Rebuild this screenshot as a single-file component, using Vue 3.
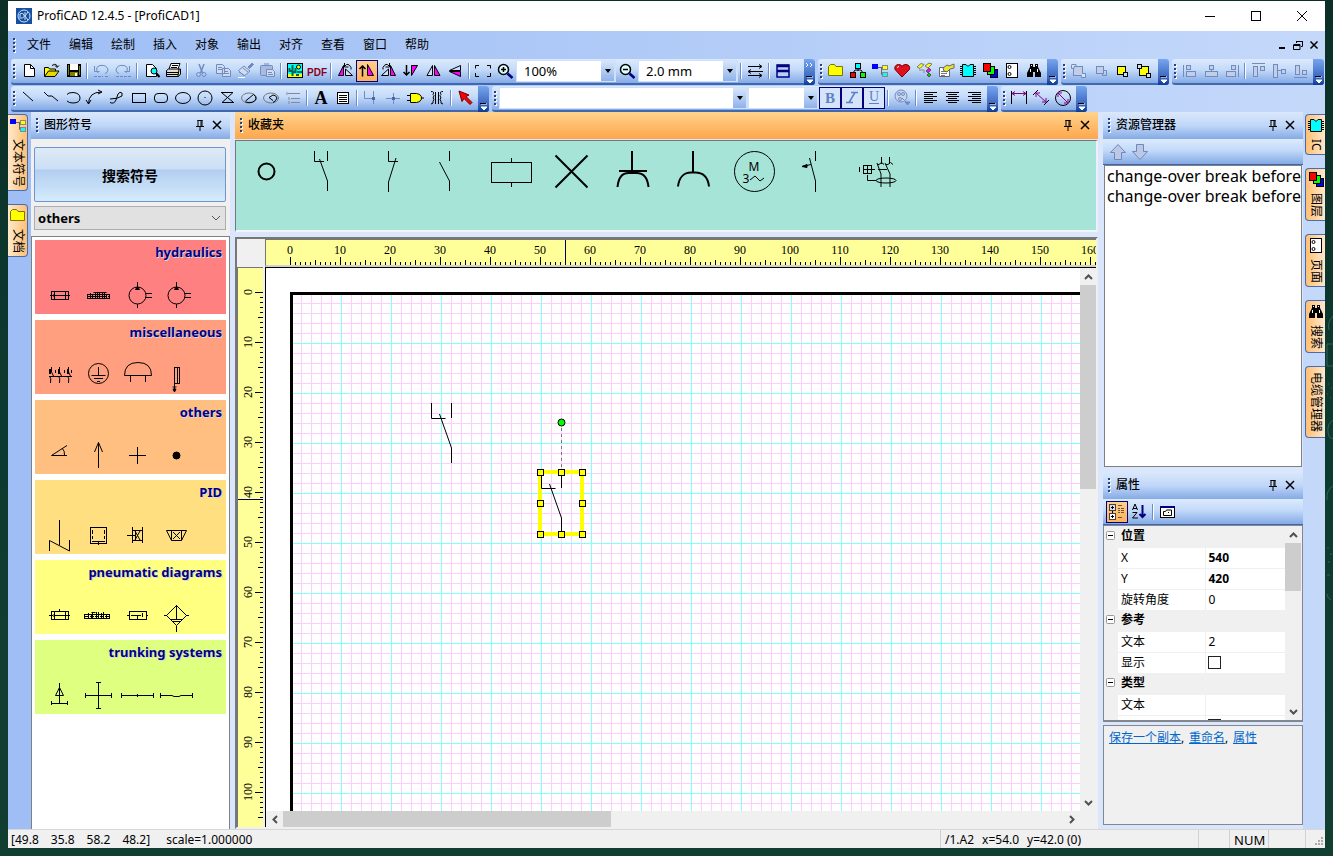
<script setup>
const D = '#6f8bc0'
const svgIcons = {
  new: '<path d="M6.500 4.500h6l4 4v8h-10z" fill="#fff" stroke="#000"/><path d="M12.500 4.500v4h4" fill="none" stroke="#000"/>',
  open: '<path d="M4.500 16V7.500h4l1 1.500h6V11" fill="#ff0" stroke="#000"/><path d="M4.500 16.500l4-5.500h10.500l-4 5.500z" fill="#e8d800" stroke="#000"/><path d="M12 5.500q3-2.500 5 0v1.500M15 5.500l2 2 2-2" fill="none" stroke="#000"/>',
  save: '<rect x="5" y="4" width="14" height="13" fill="#000"/><rect x="8" y="4" width="8" height="6" fill="#fff"/><path d="M6.500 5v10M17.500 6v9" stroke="#808000"/><rect x="8" y="12" width="8" height="4" fill="#808000"/><rect x="13" y="13" width="2" height="3" fill="#fff"/>',
  undo: `<path d="M8 13q-3.500-6 2-7.500 7-1 8 4.500-.500 3-3 3.500M4.500 6v5.500h5" fill="none" stroke="${D}"/><path d="M4 16.500h9M15 16.500h4" stroke="${D}" stroke-dasharray="3 1"/>`,
  redo: `<path d="M14 13q3.500-6-2-7.500-7-1-8 4.500 .5 3 3 3.500M17.500 6v5.500h-5" fill="none" stroke="${D}"/><path d="M4 16.500h15" stroke="${D}" stroke-dasharray="3 1"/>`,
  preview: '<path d="M6.500 4.500h6l4 4v8h-10z" fill="#fff" stroke="#000"/><circle cx="14" cy="11" r="3" fill="#0ff" stroke="#000"/><path d="M16 13l3.500 4" stroke="#000" stroke-width="2"/>',
  print: '<path d="M7 9l2-5.500h9l-2 5.500" fill="#fff" stroke="#000"/><path d="M4.500 10.500l2-1.500h12v5l-2 2.500h-12z" fill="#ddd" stroke="#000"/><path d="M4 12.500h13M5 14.500h11M17 9l-1 7M10 5.500h6M9 7.500h6" stroke="#000" fill="none"/><rect x="13" y="13" width="2" height="1" fill="#ff0"/>',
  cut: `<path d="M9 4l3.500 9M14 4l-3.500 9" stroke="${D}" fill="none" stroke-width="1.500"/><circle cx="8.500" cy="14.500" r="2" fill="none" stroke="${D}"/><circle cx="14" cy="14.500" r="2" fill="none" stroke="${D}"/>`,
  copy: `<path d="M4.500 4.500h6l2 2v7h-8zM10.500 8.500h6l2 2v6h-8z" fill="#d2dcf0" stroke="${D}"/><path d="M6 7.500h4M6 9.500h4M12 11.500h4M12 13.500h5" stroke="${D}"/>`,
  brush: `<path d="M14 7l4-4 1.500 1.500-4 4z" fill="${D}" stroke="${D}"/><path d="M10 6l6 5-6 5-5.500-5.500z" fill="#d2dcf0" stroke="${D}"/><path d="M5 12l5 3M9 8l5 4" stroke="${D}"/><path d="M4 17.500h7" stroke="#fff"/>`,
  paste: `<rect x="4.500" y="5.500" width="12" height="10" rx="1" fill="#a9bce0" stroke="${D}"/><path d="M7 5.500h7M8 4h5" stroke="${D}"/><path d="M10.500 9.500h6l2 2v5h-8z" fill="#d2dcf0" stroke="${D}"/><path d="M12 12.500h4M12 14.500h5" stroke="${D}"/>`,
  image: '<rect x="3.500" y="3.500" width="15" height="14" fill="#0ff" stroke="#000"/><path d="M4 14h14v3H4z" fill="#ff0"/><circle cx="14.500" cy="7" r="2" fill="#ff0" stroke="#000"/><path d="M8.500 5v11M5.500 8v3h3M11.500 8v4h-3M13 12h5M12 15h3" stroke="#064" stroke-width="2" fill="none"/>',
  pdf: '<text x="11" y="16" text-anchor="middle" font-family="Liberation Sans, Arial, sans-serif" font-weight="bold" font-size="10" fill="#8b0020">PDF</text>',
  rot1: '<path d="M4.500 15.500l5-10v10z" fill="#f0f" stroke="#000"/><path d="M11.500 15.500V9l7 6.500z" fill="#cfe0fa" stroke="#000"/><path d="M11 6q3-4 6 1.500v2M10.500 3v4h4" fill="none" stroke="#000"/>',
  rot2: '<path d="M6.500 16.500v-11M3.500 9l3-3 3 3" stroke="#000" fill="none" stroke-width="1.500"/><path d="M11.500 15.500v-11l6 11z" fill="#f0f" stroke="#000"/>',
  rot3: '<path d="M17.500 15.500l-5-10v10z" fill="#f0f" stroke="#000"/><path d="M10.500 15.500V9l-7 6.500z" fill="#cfe0fa" stroke="#000"/><path d="M11 6q-3-4-6 1.500v2M11.500 3v4h-4" fill="none" stroke="#000"/>',
  rot4: '<path d="M6.500 5v10M3.500 12l3 3 3-3" stroke="#000" fill="none" stroke-width="1.500"/><path d="M11.500 15.500v-10h6z" fill="#f0f" stroke="#000"/>',
  flipH: '<path d="M10.500 5.500v10h-5.500z" fill="#cfe0fa" stroke="#000"/><path d="M12.500 5.500v10h5.500z" fill="#f0f" stroke="#000"/>',
  flipV: '<path d="M5.500 10.500L16.500 5.500v5z" fill="#cfe0fa" stroke="#000"/><path d="M5.500 11.500l11 5v-5z" fill="#f0f" stroke="#000"/>',
  fit: '<path d="M7 5.500H3.500v3M3.500 13v3.500H7M15 5.500h3.500v3M18.500 13v3.500H15" fill="none" stroke="#000"/>',
  zin: '<circle cx="9.500" cy="9.500" r="5" fill="#dff" stroke="#000" stroke-width="1.500"/><path d="M7 9.500h5M9.500 7v5" stroke="#000" stroke-width="1.500"/><path d="M13.500 13.500l5 4.500" stroke="#000080" stroke-width="2.500"/>',
  zout: '<circle cx="9.500" cy="9.500" r="5" fill="#dff" stroke="#000" stroke-width="1.500"/><path d="M7 9.500h5" stroke="#000" stroke-width="1.500"/><path d="M13.500 13.500l5 4.500" stroke="#000080" stroke-width="2.500"/>',
  arrows: '<path d="M4 6.500h13M15 4.500l3 2-3 2M19 11.500H5M7 9.500l-3 2 3 2M4 15.500h13M15 13.500l3 2-3 2" stroke="#000" fill="none"/>',
  bars: '<rect x="5" y="5" width="12" height="12" fill="#b9d0f5" stroke="#000080" stroke-width="1.500"/><path d="M5 6h12M5 11h12" stroke="#000080" stroke-width="2.500"/>',
  folder: '<path d="M3.500 15.500v-9l2-2h4l1.500 2h6.500v9z" fill="#ff0" stroke="#777700"/>',
  tree: '<path d="M11 8v3M6 13l2-3h6l2 3" stroke="#000" fill="none"/><rect x="8.500" y="3.500" width="5" height="5" fill="#0ff" stroke="#000"/><rect x="3.500" y="12.500" width="5" height="5" fill="red" stroke="#000"/><rect x="13.500" y="12.500" width="5" height="5" fill="#0f0" stroke="#000"/>',
  net: '<path d="M9 7.500h5M12.500 7.500v7h2" stroke="#666" fill="none"/><rect x="3" y="4" width="6" height="5" fill="#00f"/><rect x="13.500" y="5.500" width="5" height="4" fill="#ff0" stroke="#888"/><rect x="13.500" y="12.500" width="5" height="4" fill="#0ff" stroke="#888"/>',
  heart: '<path d="M11 17L4 9.500Q3 5 7.500 4.500q3 0 3.500 2 .5-2 4-2 4.500.500 3.500 5z" fill="#e01020" stroke="#700"/><path d="M6 7.500l2-1" stroke="#fff"/>',
  tags: '<path d="M4 7l4-3.500 3 1-4 4zM12 6l4-3 3 1-4 4z" fill="#ff0" stroke="#777"/><path d="M13 11l3-3 2 2-3 3z" fill="#f0f" stroke="#555"/><path d="M14 15l2-2 2 2-2 2z" fill="#0c0" stroke="#555"/><path d="M6 10h5v3" stroke="#888" fill="none"/>',
  props: '<path d="M4.500 7.500h10v9h-10z" fill="#fff" stroke="#666"/><path d="M6 11.500h6M6 13.500h6M6 15.500h4" stroke="#777"/><path d="M8 8l4-3 2 1 5-2v4l-4 1-3 3-3-1z" fill="#e8e830" stroke="#666"/>',
  chip: '<path d="M5.500 4.500h3.500l2 2 2-2h3.500v12h-11z" fill="#0ff" stroke="#000"/><path d="M3 6.500h3M3 8.500h3M3 10.500h3M3 12.500h3M3 14.500h3M16 6.500h3M16 8.500h3M16 10.500h3M16 12.500h3M16 14.500h3" stroke="#000"/>',
  layers: '<rect x="11.500" y="9.500" width="7" height="8" fill="#00f" stroke="#000"/><rect x="8.500" y="6.500" width="7" height="8" fill="#0f0" stroke="#000"/><rect x="4.500" y="3.500" width="7" height="8" fill="red" stroke="#000"/>',
  page: '<rect x="5.500" y="3.500" width="11" height="14" fill="#fff" stroke="#000"/><circle cx="8.500" cy="7" r="1.500" fill="none" stroke="#000"/><circle cx="8.500" cy="14" r="1.500" fill="none" stroke="#000"/>',
  find: '<path d="M7 4h3v3h2V4h3v3l3 6v4h-6v-5h-2v5H4v-4l3-6z" fill="#000"/><path d="M8.500 5v1M13.500 5v1M7.500 9v3M14.500 9v3" stroke="#fff"/>',
  front: `<rect x="5.500" y="6.500" width="9" height="9" fill="#c3cde6" stroke="${D}"/><path d="M4 4.500h4v2h-2v2H3.500v-4M14.500 13.500h3v4h-4v-2" fill="#d7e4fa" stroke="${D}"/>`,
  back: `<rect x="6.500" y="6.500" width="7" height="7" fill="#c3cde6" stroke="${D}"/><path d="M13.500 10.500h3v5h-4v-2" fill="none" stroke="${D}"/>`,
  fwd: '<rect x="5.500" y="6.500" width="8" height="8" fill="#ff0" stroke="#000"/><rect x="11.500" y="12.500" width="4" height="4" fill="#cde" stroke="#000"/>',
  bwd: '<rect x="5.500" y="6.500" width="9" height="9" fill="#ff0" stroke="#000"/><rect x="3.500" y="4.500" width="4" height="4" fill="#cde" stroke="#000"/><rect x="12.500" y="13.500" width="4" height="4" fill="#cde" stroke="#000"/>',
  alL: `<path d="M4.500 5v12" stroke="${D}"/><rect x="7.500" y="5.500" width="4" height="4" fill="#c3cde6" stroke="${D}"/><rect x="7.500" y="11.500" width="9" height="5" fill="#c3cde6" stroke="${D}"/>`,
  alC: `<path d="M11.500 9v3" stroke="${D}"/><rect x="9.500" y="5.500" width="4" height="4" fill="#c3cde6" stroke="${D}"/><rect x="5.500" y="11.500" width="12" height="5" fill="#c3cde6" stroke="${D}"/>`,
  alR: `<path d="M17.500 5v12" stroke="${D}"/><rect x="10.500" y="5.500" width="4" height="4" fill="#c3cde6" stroke="${D}"/><rect x="5.500" y="11.500" width="9" height="5" fill="#c3cde6" stroke="${D}"/>`,
  alT: `<path d="M4 3.500h13" stroke="${D}"/><rect x="5.500" y="6.500" width="4" height="10" fill="#c3cde6" stroke="${D}"/><rect x="12.500" y="6.500" width="4" height="4" fill="#c3cde6" stroke="${D}"/>`,
  alM: `<path d="M9 10.500h4" stroke="${D}"/><rect x="4.500" y="4.500" width="4" height="13" fill="#c3cde6" stroke="${D}"/><rect x="12.500" y="9.500" width="4" height="4" fill="#c3cde6" stroke="${D}"/>`,
  alB: `<path d="M4 17.500h13" stroke="${D}"/><rect x="5.500" y="5.500" width="4" height="9" fill="#c3cde6" stroke="${D}"/><rect x="12.500" y="10.500" width="4" height="4" fill="#c3cde6" stroke="${D}"/>`,
  line: '<path d="M5 5l10 9" stroke="#000"/>',
  poly: '<path d="M4 5l4 4h4l6 5" stroke="#000" fill="none"/>',
  arc: '<path d="M5 7.500q1-2 6-2 7 .500 7 5.500 0 5-7 5-4 0-6-2" fill="none" stroke="#000"/>',
  curve: '<path d="M4.500 17q0-12 13-12M14 3l4 2-4 2M2 13l2.500 4 2.500-4" fill="none" stroke="#000"/>',
  bez: '<path d="M4 15.500q4 2 6-2.500l2-6q2-3 4-1v3q-4 3-12 3" fill="none" stroke="#000"/>',
  rect: '<rect x="4.500" y="6.500" width="13" height="9" fill="none" stroke="#000"/>',
  rrect: '<rect x="4.500" y="6.500" width="13" height="9" rx="3.500" fill="none" stroke="#000"/>',
  ell: '<ellipse cx="11" cy="11" rx="7.500" ry="5.500" fill="none" stroke="#000"/>',
  circ: '<circle cx="11" cy="11" r="7" fill="none" stroke="#000"/><path d="M10.500 10.500h1" stroke="#000"/>',
  hour: '<path d="M5 5.500h12L6 15.500h12M6 6l11 9" fill="none" stroke="#000"/>',
  pie: '<ellipse cx="11" cy="11" rx="7.500" ry="5" fill="none" stroke="#777"/><path d="M7.500 15q8 2 10.500-3 0-3-2.500-4.500L7.500 14" fill="none" stroke="#000"/>',
  chord: '<ellipse cx="11" cy="11" rx="7.500" ry="5" fill="none" stroke="#777"/><path d="M13 13.500l-4-3 4-2.500q3 0 4 3-1 3-4 4.500" fill="none" stroke="#000"/>',
  listd: '<path d="M6 6.500h12M9 11.500h9M9 15.500h9M5 5v3M7 10v3M7 14v3" stroke="#889"/>',
  textA: '<text x="11" y="17" text-anchor="middle" font-family="Liberation Serif, serif" font-weight="bold" font-size="18" fill="#000">A</text>',
  doc: '<rect x="5.500" y="5.500" width="11" height="11" fill="#fff" stroke="#000"/><path d="M7 8.500h8M7 10.500h8M7 12.500h8M7 14.500h8" stroke="#000"/>',
  wire1: `<path d="M4.500 4v7.500h9M13.500 4v13" stroke="${D}" fill="none"/><rect x="12" y="10" width="3" height="3" fill="#4a68a8"/>`,
  wire2: `<path d="M4 11.500h14M11.500 6v11" stroke="${D}" fill="none"/><rect x="10" y="10" width="3" height="3" fill="#4a68a8"/>`,
  gate: '<path d="M6.500 6.500h6q5 1 5 4.500t-5 4.500h-6z" fill="#ff0" stroke="#000"/><path d="M3 8.500h3M3 13.500h3M17 11h3" stroke="#000"/>',
  coil: '<path d="M5 4.500q4 0 2 3 2 .5 0 3.500 2 .5 0 3.500 1 2-2 2.500M17 4.500q-4 0-2 3-2 .5 0 3.500-2 .5 0 3.500-1 2 2 2.500M9.500 5v12M12.500 5v12" fill="none" stroke="#000"/>',
  cursor: '<path d="M5 4l10 4-3 1.500 6 6-2 2-6-6-2 3z" fill="red" stroke="#600"/>',
  bold: '<text x="11" y="16" text-anchor="middle" font-family="Liberation Serif, serif" font-weight="bold" font-size="15" fill="#5b82c4">B</text>',
  italic: '<path d="M10 5.500h7M5 15.500h7M14 5.500L8 15.500" stroke="#5b82c4" stroke-width="1.500"/>',
  under: '<text x="11" y="14" text-anchor="middle" font-family="Liberation Serif, serif" font-size="14" fill="#5b82c4">U</text><path d="M6 16.500h10" stroke="#5b82c4"/>',
  palette: `<circle cx="10" cy="9" r="6" fill="#c9d6ef" stroke="${D}"/><circle cx="8" cy="7" r="1.500" fill="none" stroke="${D}"/><circle cx="12" cy="7" r="1.500" fill="none" stroke="${D}"/><circle cx="9" cy="12" r="1.500" fill="none" stroke="${D}"/><path d="M11 11l5 5M14 15h5l-2.500 3z" stroke="${D}" fill="${D}"/>`,
  txL: '<path d="M5 5.500h13M5 7.500h9M5 9.500h13M5 11.500h9M5 13.500h13M5 15.500h9" stroke="#000"/>',
  txC: '<path d="M5 5.500h13M7 7.500h9M5 9.500h13M7 11.500h9M5 13.500h13M7 15.500h9" stroke="#000"/>',
  txR: '<path d="M5 5.500h13M9 7.500h9M5 9.500h13M9 11.500h9M5 13.500h13M9 15.500h9" stroke="#000"/>',
  dimH: '<path d="M3.500 4v13M18.500 4v13" stroke="#000"/><path d="M4 6.500h14M7 4.500l-3 2 3 2M15 4.500l3 2-3 2" stroke="#808" fill="none"/>',
  dimD: '<path d="M3 8l5-5M14 18l5-5" stroke="#000"/><path d="M6 6l10 9M6 10V6h4M16 11v4h-4" stroke="#808" fill="none"/>',
  dimC: '<circle cx="11" cy="11" r="7.500" fill="none" stroke="#000"/><path d="M6 6l10 10M6 10V6h4M16 12v4h-4" stroke="#808" fill="none"/>',
  up: '<path d="M12 3.500l7.500 8H15.500v7h-7v-7H4.500z" fill="#bcc9e6" stroke="#7088b8"/>',
  down: '<path d="M12 18.500l7.500-8H15.500v-7h-7v7H4.500z" fill="#bcc9e6" stroke="#7088b8"/>',
  cat: '<rect x="3.500" y="3.500" width="6" height="6" fill="#ddd" stroke="#444"/><rect x="3.500" y="12.500" width="6" height="6" fill="#fff" stroke="#444"/><path d="M5 6.500h3M6.500 5v3M5 15.500h3M6.500 14v3M6.500 10v2" stroke="#000"/><path d="M12 4.500h4M12 7.500h2M15 7.500h3M12 9.500h2M15 9.500h3M12 11.500h2M15 11.500h3M12 16.500h4" stroke="#6a5a3a"/>',
  az: '<path d="M4.500 9L7 3l2.500 6M5 7.500h4M4.500 11.500H9l-4.500 5.500H10" fill="none" stroke="#000"/><path d="M14.500 4v12M11.500 13l3 3 3-3" fill="none" stroke="#000080" stroke-width="2"/>',
  pages: '<rect x="4.500" y="5.500" width="14" height="11" fill="#fff" stroke="#000"/><path d="M4 6h15" stroke="#000080" stroke-width="2"/><path d="M7.500 14.500v-4h2l1-1.500h5v5.500zM12 11.500h1" fill="none" stroke="#000"/>'
}

const menus = ['文件', '编辑', '绘制', '插入', '对象', '输出', '对齐', '查看', '窗口', '帮助']
const row1 = [
  { key: 'std', cls: 'wide', more: true, items: ['new', 'open', 'save', '|', 'undo', 'redo', '|', 'preview', 'print', '|', 'cut', 'copy', 'brush', 'paste', '|', 'image', 'pdf', '|', 'rot1', '*rot2', 'rot3', 'rot4', 'flipH', 'flipV', '|', 'fit', 'zin', '#zoom', 'zout', '#step', '|', 'arrows', '|', 'bars'] },
  { key: 'lib', items: ['folder', 'tree', 'net', 'heart', 'tags', 'props', 'chip', 'layers', 'page', 'find'] },
  { key: 'order', items: ['front', 'back', 'fwd', 'bwd'] },
  { key: 'align', cls: 'tight', items: ['alL', 'alC', 'alR', '|', 'alT', 'alM', 'alB'] }
]
const row2 = [
  { key: 'draw', items: ['line', 'poly', 'arc', 'curve', 'bez', 'rect', 'rrect', 'ell', 'circ', 'hour', 'pie', 'chord', 'listd', '|', 'textA', 'doc', '|', 'wire1', 'wire2', 'gate', 'coil', '|', 'cursor'] },
  { key: 'font', items: ['#font', '#size', '!bold', '!italic', '!under', '|', 'palette', '|', 'txL', 'txC', 'txR'] },
  { key: 'dim', items: ['dimH', 'dimD', 'dimC'] }
]
const combos = { zoom: '100%', step: '2.0 mm', font: '', size: '' }
const isBtn = (s) => s !== '|' && s[0] !== '#'
const bare = (s) => s.replace(/^[*!#]/, '')

const pump = '<circle cx="19.500" cy="21.500" r="8.500"/><path d="M19.500 8v5M19.500 30v4M28 19.500h6M28 23.500h6"/><path d="M17.500 15.500l2-3 2 3z" fill="#000"/>'
const groups = [
  { name: 'hydraulics', cls: 'g1', sym: [
    '<rect x="11.500" y="17.500" width="17" height="8"/><path d="M10 21.500h4M14.500 17v9M25.500 17v9M14 21.500h16M14 20v3"/>',
    '<rect x="8.500" y="20.500" width="22" height="4"/><path d="M14.500 18.500h13M11.500 19v6M13.500 20v5M16.500 18v7M18.500 18v7M20.500 18v7M23.500 18v7M25.500 19v6M27.500 20v5"/><path d="M9 22.500h22" stroke-dasharray="4 1"/>',
    pump, pump] },
  { name: 'miscellaneous', cls: 'g2', sym: [
    '<path d="M9 22.500h23M10.500 29q1-5-1-7M19.500 29q1-5-1-7M28.500 29q1-5-1-7M11.500 13v5l2 4M19.500 13v5l2 4M28.500 13v5l2 4M15.500 16v3M24.500 16v3M31.500 16v3"/><path d="M10 15v5M19 15v5M28 15v5" stroke-width="2"/>',
    '<circle cx="19.500" cy="19.500" r="10"/><path d="M19.500 13v8M12.500 21.500h14M15 24.500h9M18 27.500h3"/>',
    '<path d="M6.500 21.500q0-13 13.500-13t13.500 13zM12.500 22v6M27.500 22v6"/>',
    '<rect x="17.500" y="13.500" width="5" height="16"/><path d="M20.500 14v15M17.500 29v7M15.500 33h4"/><path d="M16 35l1.500 3 1.500-3z" fill="#000"/>'] },
  { name: 'others', cls: 'g3', sym: [
    '<path d="M27 11.500L11.500 21.500H27M22 14q3 3 2.500 7"/>',
    '<path d="M19.500 34V8.500M15.500 18l4-9.500 4 9.500"/>',
    '<path d="M11 21.500h17M19.500 13v17"/>',
    '<circle cx="19.500" cy="21.500" r="3.500" fill="#000"/>'] },
  { name: 'PID', cls: 'g4', sym: [
    '<path d="M19.500 6v25M9.500 37V26.500l20 10.500V26"/>',
    '<rect x="11.500" y="13.500" width="16" height="16"/><path d="M13.500 16v9M25.500 16v9" stroke-dasharray="4 2"/><path d="M13 27.500h13M19.500 28v3"/>',
    '<path d="M14.500 13v16M24.500 13v16M14 16.500h11M14 26.500h11M9 21.500h8M17 17l5 9M22 17l-5 9M17.500 17v9"/>',
    '<path d="M9.500 16.500h20l-5 10h-10zM14.500 16.500v10M24.500 16.500v10M16 18l7 7M23 18l-7 7"/>'] },
  { name: 'pneumatic diagrams', cls: 'g5', sym: [
    '<rect x="11.500" y="17.500" width="17" height="8"/><path d="M9 21.500h4M14.500 17v9M25.500 17v9M14 21.500h16M19.500 15v2M14 20v3"/>',
    '<rect x="5.500" y="20.500" width="25" height="4"/><path d="M12.500 18.500h4M9.500 19v6M12.500 20v5M13.500 18v7M17.500 18v7M19.500 18v7M22.500 19v6M24.500 18v7M27.500 20v5"/><path d="M6 22.500h25" stroke-dasharray="4 1"/>',
    '<rect x="11.500" y="17.500" width="17" height="8"/><path d="M9 21.500h3M13 21.500h10M24.500 19v4M19.500 22v3M28 21.500h2"/>',
    '<path d="M9.500 21.500l10-10 10 10-10 10zM19.500 11v15M14 25.500h11M16 27.500h7M19.500 32v6M7 21.500h3M29 21.500h3"/>'] },
  { name: 'trunking systems', cls: 'g6', sym: [
    '<path d="M19.500 9v20M11.500 27v4M27.500 27v4M11 29.500h17M15.500 21.500l4-8 4 8z"/>',
    '<path d="M6 21.500h27M6.500 19v5M32.500 19v5M19.500 8v27M17 8.500h5M17 34.500h5"/>',
    '<path d="M3 21.500h33M3.500 19v5M35.500 19v5M19.500 20v3"/>',
    '<path d="M3 21.500h12l2 1h5l2-1h12M3.500 19v5M35.500 19v5"/>'] }
]
const favs = [
  '<circle cx="30.500" cy="30.500" r="8" stroke-width="2"/>',
  '<path d="M17.500 10v10.500H27M30.500 10v10M22.500 18l8 22v10"/>',
  '<path d="M30.500 10v10.500H40M38 17l-7.500 24v10"/>',
  '<path d="M30.500 10v10M20.500 21l10 19v10"/>',
  '<rect x="11.500" y="21.500" width="40" height="20"/><path d="M31.500 17v4M31.500 42v4"/>',
  '<path d="M14.500 14.500l32 32M46.500 14.500l-32 32" stroke-width="2"/>',
  '<path d="M30 10v21M17 30h28M15.500 46c1-10 5-14 11-14h8c7 0 11 4 12 14" stroke-width="2"/>',
  '<path d="M30 10v22M15 45.500c1-9 6-14 13-14h4c8 0 13 5 14 14" stroke-width="2"/>',
  '<circle cx="30.500" cy="30.500" r="20"/><text x="30" y="30" text-anchor="middle" font-size="12" stroke="none" fill="#000">M</text><text x="22" y="42" text-anchor="middle" font-size="12" stroke="none" fill="#000">3</text><path d="M26 39l5-4 5 5 4-3"/>',
  '<path d="M30.500 10v10M24.500 17l6 23v11M17 25.500l9-2"/><path d="M17 25.500l5-2v3z" fill="#000"/>',
  '<rect x="17.500" y="24.500" width="8" height="8"/><path d="M13.500 26v5M21.500 24v9M17 28.500h12M32 28.500h9M21.500 34v5.500h9M35.500 16v7M43.500 16v7M31 23.500h2l2.500-2 2.500 2M40 23.500h2l2.500-2 2.500 2M31 22l4 11v13M39 22l5 11v13"/><ellipse cx="40" cy="39.500" rx="10" ry="2.500"/>'
]
const hMarks = Array.from({ length: 200 }, (_, i) => i)
const hLabels = Array.from({ length: 17 }, (_, i) => i)
const tick = (i) => (i % 10 === 0 ? 8 : i % 5 === 0 ? 5 : 3)
const handles = [[270, 200], [291, 200], [312, 200], [270, 231], [312, 231], [270, 262], [291, 262], [312, 262]]
const rightTabs = [
  { t: 'IC', i: 'chip' }, { t: '图层', i: 'layers' }, { t: '页面', i: 'page' }, { t: '搜索', i: 'find' }, { t: '电缆管理器', i: '' }
]
const props = [
  { cat: '位置' }, { n: 'X', v: '540', b: true }, { n: 'Y', v: '420', b: true }, { n: '旋转角度', v: '0' },
  { cat: '参考' }, { n: '文本', v: '2' }, { n: '显示', check: true },
  { cat: '类型' }, { n: '文本', v: '' }, { n: '显示', check: true }
]
const results = ['change-over break before', 'change-over break before']
</script>

<template>
  <div class="desktop">
    <svg class="chalk" width="8" height="400" fill="none" stroke="#4f7d70"><path d="M8 6q-6 6-4 14M2 34h6M2 34v22h6M3 74h1M6 78h1M2 84h1M5 88h1M8 110q-6 4-5 12t5 6M8 176q-7 4-6 14M2 238h2M5 244h2M3 252h2M2 265h3M6 290q-4-2-4-6" /></svg>
    <div class="window">
      <header class="title">
        <svg class="logo" width="16" height="16" viewBox="0 0 16 16"><rect width="16" height="16" fill="#1450a0" /><g fill="none" stroke="#cfe2fa"><circle cx="8" cy="8" r="6" /><path d="M4 11V6q3-2 4 1t-3 3M9 4v8M12 4L9 8l3 4" /></g></svg>
        <h1>ProfiCAD 12.4.5 - [ProfiCAD1]</h1>
        <button class="wb" aria-label="Minimize"><svg width="12" height="12"><path d="M1 6.500h10" stroke="#000" /></svg></button>
        <button class="wb" aria-label="Maximize"><svg width="12" height="12"><rect x="1.500" y="1.500" width="9" height="9" fill="none" stroke="#000" /></svg></button>
        <button class="wb" aria-label="Close"><svg width="12" height="12"><path d="M1 1l10 10M11 1L1 11" stroke="#000" /></svg></button>
      </header>

      <nav class="menu">
        <span class="grip"></span>
        <button v-for="m in menus" :key="m" class="mi">{{ m }}</button>
        <span class="mdi">
          <button aria-label="Minimize document"><svg width="12" height="12"><path d="M3 9h6" stroke="#000" stroke-width="2" /></svg></button>
          <button aria-label="Restore document"><svg width="12" height="12"><path d="M4.500 4V2.500h6v5H9M4 2.500h7M2 5.500h6v5H1.500v-5M1 6.500h7" fill="none" stroke="#000" /></svg></button>
          <button aria-label="Close document"><svg width="12" height="12"><path d="M2.500 2.500l7 7M9.500 2.500l-7 7" stroke="#000" stroke-width="1.500" /></svg></button>
        </span>
      </nav>

      <div v-for="(row, r) in [row1, row2]" :key="r" class="bars">
        <div v-for="tb in row" :key="tb.key" class="bar" :class="tb.cls" role="toolbar" :aria-label="tb.key">
          <span class="grip"></span>
          <template v-for="(it, k) in tb.items" :key="k">
            <span v-if="it === '|'" class="sep"></span>
            <button v-else-if="isBtn(it)" class="tb" :class="{ on: it[0] === '*', boxed: it[0] === '!' }" :aria-label="bare(it)">
              <svg width="22" height="22" viewBox="0 0 22 22" v-html="svgIcons[bare(it)]"></svg>
            </button>
            <label v-else class="combo" :class="bare(it)">
              <select :aria-label="bare(it)"><option>{{ combos[bare(it)] }}</option></select>
              <span class="drop"></span>
            </label>
          </template>
          <button class="more" aria-label="Toolbar options">
            <svg width="11" height="26" viewBox="0 0 11 26"><path v-if="tb.more" d="M2 4l2 2-2 2M6 4l2 2-2 2" stroke="#fff" fill="none" /><path d="M3 18h6M3 21h6l-3 3z" stroke="#fff" fill="#fff" /><path d="M2 17.500h6" stroke="#000" /></svg>
          </button>
        </div>
      </div>

      <main class="main">
        <aside class="strip left">
          <button class="tab"><svg width="22" height="22" viewBox="0 0 22 22" v-html="svgIcons.net"></svg><span>文本符号</span></button>
          <button class="tab"><svg width="22" height="22" viewBox="0 0 22 22" v-html="svgIcons.folder"></svg><span>文档</span></button>
        </aside>

        <section class="panel symbols">
          <header class="ph"><span class="grip"></span><h2>图形符号</h2>
            <button aria-label="Pin"><svg width="12" height="12"><path d="M4 1v6M7 1v6M8 1v6M3.500 1.500h5M2 7.500h8M6 8v4" stroke="#000" fill="none" /></svg></button>
            <button aria-label="Close"><svg width="12" height="12"><path d="M2 2l8 8M10 2l-8 8" stroke="#000" stroke-width="1.500" /></svg></button>
          </header>
          <div class="tools">
            <button class="search">搜索符号</button>
            <label class="cat"><select aria-label="Category"><option>others</option></select><svg width="10" height="6"><path d="M1 1l4 4 4-4" fill="none" stroke="#555" /></svg></label>
          </div>
          <div class="cards">
            <article v-for="g in groups" :key="g.name" class="card" :class="g.cls">
              <h3>{{ g.name }}</h3>
              <div class="syms"><svg v-for="(s, k) in g.sym" :key="k" width="39" height="40" fill="none" stroke="#000" v-html="s"></svg></div>
            </article>
          </div>
        </section>

        <section class="center">
          <header class="ph hot"><span class="grip"></span><h2>收藏夹</h2>
            <button aria-label="Pin"><svg width="12" height="12"><path d="M4 1v6M7 1v6M8 1v6M3.500 1.500h5M2 7.500h8M6 8v4" stroke="#000" fill="none" /></svg></button>
            <button aria-label="Close"><svg width="12" height="12"><path d="M2 2l8 8M10 2l-8 8" stroke="#000" stroke-width="1.500" /></svg></button>
          </header>
          <div class="favs"><svg v-for="(f, k) in favs" :key="k" width="61" height="60" fill="none" stroke="#000" v-html="f"></svg></div>
          <div class="work">
            <div class="corner"></div>
            <div class="hr">
              <svg width="100%" height="25">
                <path v-for="i in hMarks" :key="i" :d="`M${24.5 + i * 5} 25v-${tick(i)}`" stroke="#000" />
                <text v-for="i in hLabels" :key="'l' + i" :x="24 + i * 50" y="14" text-anchor="middle">{{ i * 10 }}</text>
                <path d="M299.500 0v20" stroke="#000060" />
              </svg>
            </div>
            <div class="vr">
              <svg width="25" height="100%">
                <path v-for="i in 106" :key="i" :d="`M25 ${19.5 + i * 5}h-${tick(i - 1)}`" stroke="#000" />
                <text v-for="i in 11" :key="'v' + i" :transform="`translate(14 ${i * 50 - 26}) rotate(-90)`" text-anchor="middle">{{ (i - 1) * 10 }}</text>
                <path d="M0 231.500h25" stroke="#000060" />
              </svg>
            </div>
            <div class="view">
              <div class="sheet">
                <svg width="100%" height="100%">
                  <defs>
                    <pattern id="grid" x="0" y="0" width="50" height="50" patternUnits="userSpaceOnUse">
                      <path d="M5.500 0v50M15.500 0v50M35.500 0v50M45.500 0v50M0 5.500h50M0 15.500h50M0 35.500h50M0 45.500h50" stroke="#fcf" />
                      <path d="M25.500 0v50M0 25.500h50" stroke="#80ffff" />
                    </pattern>
                  </defs>
                  <rect x="24" y="24" width="100%" height="100%" fill="url(#grid)" />
                  <path d="M3000 25.500H25.500V3000" fill="none" stroke="#000" stroke-width="3" />
                  <g fill="none" stroke="#000">
                    <path d="M165.500 135v15.500h14M185.500 135v15M173.500 146l12 34v15" />
                    <path d="M295.500 160v40" stroke="#777" stroke-dasharray="3 3" />
                    <rect x="274" y="204" width="42" height="62" stroke="#ff0" stroke-width="4" />
                    <path d="M275.500 206v14.500h14M295.500 205v15M283.500 216l12 34v15" />
                    <g fill="#ff0"><rect v-for="(h, k) in handles" :key="k" :x="h[0] + 1.5" :y="h[1] + 1.5" width="6" height="6" /></g>
                    <circle cx="295.500" cy="154.500" r="3.500" fill="#0f0" />
                  </g>
                </svg>
              </div>
              <div class="sb v">
                <button aria-label="Up"><svg width="9" height="6"><path d="M1 5l3.500-3.500L8 5" /></svg></button>
                <div class="track"><div class="thumb"></div></div>
                <button aria-label="Down"><svg width="9" height="6"><path d="M1 1l3.500 3.500L8 1" /></svg></button>
              </div>
              <div class="sb h">
                <button aria-label="Left"><svg width="6" height="9"><path d="M5 1L1.500 4.500 5 8" /></svg></button>
                <div class="track"><div class="thumb"></div></div>
                <button aria-label="Right"><svg width="6" height="9"><path d="M1 1l3.500 3.500L1 8" /></svg></button>
              </div>
              <div class="nook"></div>
            </div>
          </div>
        </section>

        <section class="panel right">
          <header class="ph"><span class="grip"></span><h2>资源管理器</h2>
            <button aria-label="Pin"><svg width="12" height="12"><path d="M4 1v6M7 1v6M8 1v6M3.500 1.500h5M2 7.500h8M6 8v4" stroke="#000" fill="none" /></svg></button>
            <button aria-label="Close"><svg width="12" height="12"><path d="M2 2l8 8M10 2l-8 8" stroke="#000" stroke-width="1.500" /></svg></button>
          </header>
          <div class="ptb">
            <button v-for="n in ['up', 'down']" :key="n" class="tb" :aria-label="n"><svg width="22" height="22" viewBox="0 0 22 22" v-html="svgIcons[n]"></svg></button>
          </div>
          <ul class="found"><li v-for="(t, k) in results" :key="k">{{ t }}</li></ul>

          <header class="ph second"><span class="grip"></span><h2>属性</h2>
            <button aria-label="Pin"><svg width="12" height="12"><path d="M4 1v6M7 1v6M8 1v6M3.500 1.500h5M2 7.500h8M6 8v4" stroke="#000" fill="none" /></svg></button>
            <button aria-label="Close"><svg width="12" height="12"><path d="M2 2l8 8M10 2l-8 8" stroke="#000" stroke-width="1.500" /></svg></button>
          </header>
          <div class="ptb">
            <button class="tb on" aria-label="Categorized"><svg width="22" height="22" viewBox="0 0 22 22" v-html="svgIcons.cat"></svg></button>
            <button class="tb" aria-label="Alphabetical"><svg width="22" height="22" viewBox="0 0 22 22" v-html="svgIcons.az"></svg></button>
            <span class="sep"></span>
            <button class="tb" aria-label="Property pages"><svg width="22" height="22" viewBox="0 0 22 22" v-html="svgIcons.pages"></svg></button>
          </div>
          <div class="pg">
            <div class="rows">
              <table>
                <colgroup><col class="c1" /><col class="c2" /><col /></colgroup>
                <tbody>
                  <tr v-for="(p, k) in props" :key="k">
                    <th v-if="p.cat" colspan="3"><svg width="9" height="9"><rect x=".500" y=".500" width="8" height="8" rx="1" fill="#fff" stroke="#999" /><path d="M2 4.500h5" stroke="#000" /></svg>{{ p.cat }}</th>
                    <template v-else>
                      <td></td>
                      <td class="nm">{{ p.n }}</td>
                      <td class="val" :class="{ b: p.b }"><input v-if="p.check" type="checkbox" :aria-label="p.n" /><template v-else>{{ p.v }}</template></td>
                    </template>
                  </tr>
                </tbody>
              </table>
            </div>
            <div class="sb v">
              <button aria-label="Up"><svg width="9" height="6"><path d="M1 5l3.500-3.500L8 5" /></svg></button>
              <div class="track"><div class="thumb small"></div></div>
              <button aria-label="Down"><svg width="9" height="6"><path d="M1 1l3.500 3.500L8 1" /></svg></button>
            </div>
          </div>
          <div class="help"><a href="#">保存一个副本</a><span>,</span><a href="#">重命名</a><span>,</span><a href="#">属性</a></div>
        </section>

        <aside class="strip rt">
          <button v-for="t in rightTabs" :key="t.t" class="tab"><svg v-if="t.i" width="22" height="22" viewBox="0 0 22 22" v-html="svgIcons[t.i]"></svg><span>{{ t.t }}</span></button>
        </aside>
      </main>

      <footer class="status">
        <span class="coords"><i>[49.8</i><i>35.8</i><i>58.2</i><i>48.2]</i></span><span class="scale">scale=1.000000</span>
        <span class="pos"><i>/1.A2</i><i>x=54.0</i><i>y=42.0 (0)</i></span>
        <span class="cell"></span><span class="cell num">NUM</span><span class="cell e"></span>
        <span class="cell last"><svg width="9" height="9"><path d="M6 1h2M3 4h2M6 4h2M0 7h2M3 7h2M6 7h2" stroke="#aaa" stroke-width="2" /></svg></span>
      </footer>
    </div>
  </div>
</template>

<style>
html, body { margin: 0; background: #0c372d; }
</style>

<style scoped>
* { box-sizing: border-box; }
.desktop { position: relative; height: 100vh; padding: 1px 8px 8px; background: linear-gradient(180deg, #0b2f27, #0d3a30 50%, #123d31); font: 12px/16px "Noto Sans", "Noto Sans CJK SC", sans-serif; color: #000; overflow: hidden; }
.chalk { position: absolute; right: 0; top: 310px; opacity: 0.6; }
.window { height: 100%; display: flex; flex-direction: column; background: linear-gradient(90deg, #9ebef5, #c4d8fa); }
button { border: 0; padding: 0; margin: 0; background: none; font: inherit; color: inherit; display: flex; align-items: center; justify-content: center; flex: none; }
svg { display: block; flex: none; overflow: visible; }
h1, h2, h3 { margin: 0; font: inherit; }
.title { height: 30px; background: #fff; display: flex; align-items: center; padding-left: 8px; flex: none; }
.title h1 { flex: 1; padding-left: 5px; }
.wb { width: 46px; height: 30px; }
.menu { height: 28px; display: flex; align-items: center; padding-left: 3px; flex: none; }
.mi { width: 42px; height: 24px; }
.mdi { margin-left: auto; display: flex; padding-right: 3px; }
.mdi button { width: 16px; height: 16px; }
.grip { width: 3px; height: 15px; margin: 0 2px; flex: none; background: repeating-linear-gradient(#27417f 0 2px, transparent 2px 4px) 0 0 / 2px 100% no-repeat, repeating-linear-gradient(transparent 0 1px, #fff 1px 3px, transparent 3px 4px) 1px 0 / 2px 100% no-repeat; }
.bars { height: 26px; padding-left: 3px; display: flex; gap: 3px; flex: none; }
.bars + .bars { margin-top: 1px; }
.bar { height: 26px; display: flex; align-items: center; border-radius: 3px; background: linear-gradient(#dceafd, #c3daf9 45%, #84aae6); border-bottom: 2px solid #4068ae; flex: none; }
.bar.wide .more { margin-left: 10px; }
.tb { width: 22px; height: 22px; }
.tight .tb { width: 21px; }
.tb.on { background: linear-gradient(#ffcf8c, #ffb05a); border: 1px solid #000080; }
.tb.boxed { background: #d5e4fb; border: 1px solid #000080; }
.sep { width: 2px; height: 16px; margin: 0 2px; background: linear-gradient(90deg, #6a8ccb 1px, #fff 1px); flex: none; }
.more { width: 11px; height: 26px; margin: 0 0 -2px 2px; border-radius: 0 3px 3px 0; background: linear-gradient(#76a5f0, #3c68be 70%, #0b3c98); }
.combo { height: 22px; display: flex; background: #fff; border: 1px solid #cfe0fa; border-right-width: 2px; flex: none; }
.combo select { appearance: none; border: 0; background: none; font: 13px/20px "Noto Sans", sans-serif; color: #000; flex: 1; min-width: 0; padding: 0 0 0 7px; }
.drop { width: 13px; height: 20px; background: linear-gradient(#d6e5fb, #8fb2ea); flex: none; display: flex; align-items: center; justify-content: center; }
.drop::after { content: ""; border: 3px solid transparent; border-top: 4px solid #000; border-bottom: 0; }
.combo.zoom, .combo.step { width: 100px; }
.combo.font { width: 249px; }
.combo.size { width: 71px; }
.main { flex: 1; min-height: 0; display: flex; }
.strip { width: 22px; display: flex; flex-direction: column; gap: 13px; padding-top: 2px; flex: none; }
.strip.left { width: 20px; margin-right: 3px; }
.tab { flex-direction: column; justify-content: flex-start; width: 20px; gap: 2px; padding-bottom: 3px; border: 1px solid #4a6cae; border-radius: 0 4px 4px 0; border-left: 0; background: linear-gradient(90deg, #ffe9cd, #ffbf72); }
.tab span { writing-mode: vertical-rl; text-orientation: sideways; line-height: 18px; }
.rt { margin-left: auto; align-items: flex-end; }
.rt .tab { border: 1px solid #4a6cae; border-right: 0; border-radius: 4px 0 0 4px; background: linear-gradient(90deg, #ffbf72, #ffe9cd); }
.rt .tab:last-child { padding: 5px 0; }
.panel { display: flex; flex-direction: column; flex: none; }
.symbols { width: 199px; background: #f0f0f0; }
.ph { height: 27px; display: flex; align-items: center; gap: 3px; padding: 0 6px 1px 3px; background: linear-gradient(#dbe8fb, #c0d7f8 50%, #84aae5); flex: none; }
.ph h2 { flex: 1; font-weight: 500; }
.ph button { width: 14px; height: 16px; }
.ph.hot { background: linear-gradient(#ffd38c, #ffa64c); }
.tools { padding: 8px 4px 6px 3px; display: flex; flex-direction: column; gap: 4px; }
.search { height: 55px; border: 1px solid #6d95d0; border-radius: 2px; background: linear-gradient(#dfeaf6, #cbdff5 40%, #b2cdef 41%, #d5ecfd); font: bold 14px/20px "Noto Sans CJK SC", sans-serif; }
.cat { height: 24px; display: flex; align-items: center; padding-right: 4px; background: #e1e1e1; border: 1px solid #adadad; }
.cat select { appearance: none; border: 0; background: none; flex: 1; padding: 0 3px; font: bold 13px/20px "Noto Sans", sans-serif; color: #000; }
.cards { flex: 1; min-height: 0; overflow: hidden; display: flex; flex-direction: column; gap: 6px; padding: 3px; background: #fff; border: 1px solid #808080; border-bottom: 0; }
.card { height: 74px; display: flex; flex-direction: column; justify-content: space-between; flex: none; }
.card h3 { text-align: right; padding: 3px 4px 0; font: bold 13px/18px "Noto Sans", sans-serif; color: #000080; text-shadow: 1px 1px 0 #d6d6ea; }
.syms { display: flex; padding-left: 5px; }
.g1 { background: #ff8080; }
.g2 { background: #ff9f80; }
.g3 { background: #ffbf80; }
.g4 { background: #ffdf80; }
.g5 { background: #ffff80; }
.g6 { background: #dfff80; }
.center { flex: 1; min-width: 0; display: flex; flex-direction: column; background: #d9e6fb; border-left: 5px solid #d9e6fb; border-right: 5px solid #d9e6fb; }
.favs { height: 92px; display: flex; background: #a5e4d7; border: 1px solid #777; border-right: 2px solid #eef; border-bottom: 2px solid #f4f4f4; margin-top: 1px; overflow: hidden; flex: none; }
.work { flex: 1; min-height: 0; margin: 5px 0 0; display: grid; grid-template-columns: 28px 1fr; grid-template-rows: 28px 1fr; border: 2px solid #777; border-right-color: #f0f0f0; border-bottom-color: #f0f0f0; background: #f0f0f0; }
.work text { font: 12px "Liberation Serif", "Times New Roman", serif; }
.hr { border-left: 1px solid #777; border-top: 1px solid #777; border-bottom: 2px solid #d0d0d0; background: #ffff99; overflow: hidden; min-width: 0; }
.vr { border-left: 1px solid #777; border-top: 1px solid #777; margin-right: 2px; background: #ffff99; overflow: hidden; min-height: 0; }
.vr svg, .hr svg, .sheet svg { overflow: hidden; }
.view { border-left: 1px solid #000; border-top: 1px solid #000; display: grid; grid-template-columns: 1fr 16px; grid-template-rows: 1fr 16px; min-width: 0; min-height: 0; background: #fff; }
.sheet { position: relative; min-width: 0; min-height: 0; background: #fff; }
.sheet svg { position: absolute; left: 0; top: 0; }
.sb { display: flex; background: #f0f0f0; flex: none; }
.sb.v { width: 16px; flex-direction: column; grid-area: 1 / 2; }
.sb.h { grid-area: 2 / 1; }
.sb button { width: 17px; height: 17px; }
.sb.v button { width: 16px; }
.sb.h button { height: 16px; }
.sb path { fill: none; stroke: #505050; stroke-width: 2; }
.track { flex: 1; min-width: 0; min-height: 0; }
.thumb { background: #cdcdcd; }
.sb.v .thumb { height: 40%; }
.sb.v .thumb.small { height: 30%; }
.sb.h .thumb { width: 42%; height: 100%; }
.nook { grid-area: 2 / 2; background: #f0f0f0; }
.right { width: 200px; background: #d9e6fb; }
.ptb { height: 26px; padding-left: 3px; display: flex; align-items: center; background: linear-gradient(#dceafd, #c3daf9 45%, #84aae6); border-bottom: 1px solid #4068ae; flex: none; }
.found { flex: 1; min-height: 0; margin: 0 1px 5px; padding: 0 2px; list-style: none; background: #fff; border: 1px solid #808080; font-size: 16px; line-height: 20px; white-space: nowrap; overflow: hidden; }
.pg { height: 197px; display: flex; padding-right: 1px; border: 1px solid #828790; border-bottom-width: 2px; background: #f0f0f0; flex: none; }
.rows { flex: 1; min-width: 0; overflow: hidden; }
table { width: 100%; border-collapse: collapse; table-layout: fixed; }
.c1 { width: 14px; }
.c2 { width: 87px; }
td, th { padding: 0; height: 21px; text-align: left; overflow: hidden; white-space: nowrap; line-height: 20px; }
th { font-weight: bold; }
th svg { display: inline-block; margin: 0 6px 0 2px; }
.nm { padding-left: 3px; background: #fff; border-top: 1px solid #f0f0f0; border-right: 1px solid #f0f0f0; }
.val { padding-left: 3px; background: #fff; border-top: 1px solid #f0f0f0; }
.val.b { font-weight: bold; }
.val input { appearance: none; display: block; width: 13px; height: 13px; margin: 0 0 0 -1px; border: 1px solid #222; background: #fff; }
.help { height: 100px; margin: 3px 0 4px; padding: 4px 5px; display: flex; align-items: flex-start; background: #f0f0f0; border: 1px solid #828790; flex: none; }
.help a { color: #0066cc; }
.help span { width: 8px; }
.status { height: 19px; display: flex; background: #f0f0f0; border-top: 1px solid #d7d7d7; line-height: 20px; flex: none; padding-left: 3px; }
.status i { font-style: normal; }
.coords { display: flex; gap: 12px; }
.scale { padding-left: 16px; flex: 1; }
.pos { width: 258px; padding-left: 4px; display: flex; gap: 8px; border-left: 1px solid #d0d0d0; }
.cell { width: 31px; border-left: 1px solid #d0d0d0; }
.num { width: 39px; padding-left: 4px; font-size: 13px; }
.e { width: 37px; }
.last { width: 20px; display: flex; align-items: flex-end; padding: 0 0 2px 9px; }
</style>
